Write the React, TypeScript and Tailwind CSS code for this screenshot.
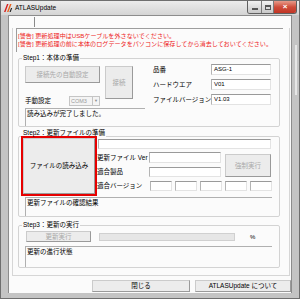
import React from "react";

const font = "font-['Liberation_Sans','Noto_Sans_CJK_JP',sans-serif]";

function TextBox({ className = "", children }: { className?: string; children?: React.ReactNode }) {
  return (
    <div
      className={[
        "bg-white border border-t-[#9a9a9a] border-l-[#b4b4b4] border-r-[#e3e3e3] border-b-[#e3e3e3] pl-[2px] text-[6px] leading-[8px] text-black overflow-hidden whitespace-nowrap",
        className,
      ].join(" ")}
    >
      {children}
    </div>
  );
}

function Btn({
  className = "",
  disabled = false,
  children,
}: {
  className?: string;
  disabled?: boolean;
  children?: React.ReactNode;
}) {
  return (
    <button
      type="button"
      className={[
        "flex items-center justify-center bg-[#ececec] border border-[#cbcbcb] border-r-[#9a9a9a] border-b-[#9a9a9a] whitespace-nowrap text-[6.5px] leading-[8px]",
        disabled ? "text-[#a8a8a8]" : "text-black",
        className,
      ].join(" ")}
    >
      {children}
    </button>
  );
}

function Group({
  title,
  className = "",
  legendClassName = "",
  children,
}: {
  title: string;
  className?: string;
  legendClassName?: string;
  children?: React.ReactNode;
}) {
  return (
    <fieldset className={["border border-[#d3d3d3] rounded-[2px] min-w-0", className].join(" ")}>
      <legend className={["ml-[3px] px-[1px] text-[6.5px] leading-[8px] text-black relative z-10", legendClassName].join(" ")}>
        {title}
      </legend>
      {children}
    </fieldset>
  );
}

function Field({ label, value }: { label: string; value: string }) {
  return (
    <div className="flex items-center h-[11px]">
      <span className="w-[58px] text-[6.5px] leading-[8px] whitespace-nowrap">{label}</span>
      <TextBox className="w-[60px] h-[11px]">{value}</TextBox>
    </div>
  );
}

function Logo() {
  return (
    <svg width="10" height="10" viewBox="0 0 10 10">
      <path d="M1 9 L4 1 L5.5 1 L2.5 9 Z" fill="#d62020" />
      <path d="M4 9 L7 1 L8.5 1 L5.5 9 Z" fill="#e8641c" />
      <path d="M6.5 9 L8 5 L9.2 5 L7.7 9 Z" fill="#222" />
    </svg>
  );
}

export default function App() {
  return (
    <div className={`w-[300px] h-[299px] flex flex-col bg-[#c4c4c4] border border-[#6f6f6f] text-black ${font}`}>
      {/* title bar */}
      <div className="h-[14px] flex items-start bg-linear-to-b from-[#ececec] to-[#d4d4d4]">
        <div className="ml-[2px] mt-[2px]">
          <Logo />
        </div>
        <span className="ml-[2px] mt-[3px] text-[6.5px] leading-[8px]">ATLASUpdate</span>
        <div className="ml-auto mr-[2px] flex h-[13px] border border-t-0 border-[#5f5f5f] rounded-b-[3px] overflow-hidden">
          <div className="w-[14px] flex items-center justify-center bg-linear-to-b from-[#f2f2f2] to-[#c8c8c8] border-r border-[#7a7a7a]">
            <div className="w-[6px] h-[2px] mt-[4px] bg-white border border-[#555]" />
          </div>
          <div className="w-[12px] flex items-center justify-center bg-linear-to-b from-[#f2f2f2] to-[#c8c8c8] border-r border-[#7a7a7a]">
            <div className="w-[6px] h-[5px] border border-[#555] border-t-2" />
          </div>
          <div className="w-[22px] flex items-center justify-center bg-linear-to-b from-[#e69a8a] via-[#cf4c3a] to-[#c13525]">
            <span className="text-white text-[8px] leading-[8px] font-bold">×</span>
          </div>
        </div>
      </div>

      <div className="flex-1 flex">
        {/* left frame */}
        <div className="w-[7px]" />
        {/* client */}
        <div className="w-[284px] flex flex-col bg-[#fbfbfb] border border-[#8c8c8c] border-b-0">
          <div className="h-[12px] flex">
            <div className="ml-[25px] mt-[1px] w-px h-[10px] bg-[#8a8a8a]" />
          </div>

          <div className="ml-[3px] w-[278px] h-[248px] flex flex-col border border-t-0 border-[#d6d6d6]">
            {/* warnings */}
            <div className="ml-[3px] w-[267px] h-[24px] border-t border-l border-[#9d9d9d] pl-[1px] pt-[3px] text-[6.1px] leading-[8px] text-[#ee1c1c] whitespace-nowrap">
              <div>[警告] 更新処理中はUSBケーブルを外さないでください。</div>
              <div>[警告] 更新処理の前に本体のログデータをパソコンに保存してから消去しておいてください。</div>
            </div>

            {/* Step1 */}
            <Group title="Step1：本体の準備" className="ml-[5px] mt-[2px] w-[262px]">
              <div className="flex items-start">
                <div className="ml-[6px] mt-[4px] w-[120px] flex flex-col">
                  <div className="flex items-start">
                    <div className="flex flex-col">
                      <Btn disabled className="w-[75px] h-[17px]">
                        接続先の自動設定
                      </Btn>
                      <div className="mt-[13px] h-[10px] flex items-center">
                        <span className="w-[44px] text-[6.5px] leading-[8px]">手動設定</span>
                        <div className="w-[31px] h-[10px] flex border border-[#c5c5c5] bg-[#f4f4f4]">
                          <span className="flex-1 pl-[1px] text-[5.5px] leading-[8px] text-[#9a9a9a]">COM3</span>
                          <div className="w-[7px] border-l border-[#c5c5c5] flex items-center justify-center text-[4px] text-[#8a8a8a]">
                            ▼
                          </div>
                        </div>
                      </div>
                    </div>
                    <Btn disabled className="ml-[5px] w-[28px] h-[33px]">
                      接続
                    </Btn>
                  </div>
                  <div className="mt-[2px] h-[18px] border-t border-l border-[#b0b0b0] pl-[1px] pt-[1px] text-[6.5px] leading-[8px] whitespace-nowrap">
                    読み込みが完了しました。
                  </div>
                </div>
                <div className="ml-[8px] mt-[2px] flex flex-col gap-[4px]">
                  <Field label="品番" value="ASG-1" />
                  <Field label="ハードウエア" value="V01" />
                  <Field label="ファイルバージョン" value="V1.03" />
                </div>
              </div>
            </Group>

            {/* Step2 */}
            <Group title="Step2：更新ファイルの準備" className="ml-[5px] mt-[5px] w-[262px]" legendClassName="-top-[3px]">
              <div className="flex items-start">
                <div className="ml-[2px] mt-[-4px] w-[76px] h-[60px] border-2 border-[#e60000] flex">
                  <Btn className="flex-1">ファイルの読み込み</Btn>
                </div>
                <div className="ml-[1px] mt-[-1px] flex flex-col">
                  <TextBox className="w-[173px] h-[10px]" />
                  <div className="mt-[3px] flex items-start">
                    <div className="flex flex-col gap-[4px]">
                      <div className="flex items-center h-[11px]">
                        <span className="w-[52px] -ml-[1px] text-[6.5px] leading-[8px] whitespace-nowrap">更新ファイル Ver</span>
                        <TextBox className="w-[72px] h-[11px]" />
                      </div>
                      <div className="flex items-center h-[10px]">
                        <span className="w-[52px] -ml-[1px] text-[6.5px] leading-[8px] whitespace-nowrap">適合製品</span>
                        <TextBox className="w-[72px] h-[10px]" />
                      </div>
                    </div>
                    <Btn disabled className="ml-[4px] mt-[2px] w-[46px] h-[23px]">
                      強制実行
                    </Btn>
                  </div>
                  <div className="mt-[4px] flex items-center h-[10px]">
                    <span className="w-[53px] -ml-[1px] text-[6.5px] leading-[8px] whitespace-nowrap">適合バージョン</span>
                    <div className="flex gap-[3px]">
                      {[0, 1, 2, 3, 4].map((i) => (
                        <TextBox key={i} className="w-[22px] h-[10px]" />
                      ))}
                    </div>
                  </div>
                </div>
              </div>
              <div className="ml-[6px] mt-[1px] w-[247px] h-[19px] border-t border-l border-[#b0b0b0] pl-[1px] pt-[1px] text-[6.5px] leading-[8px] whitespace-nowrap">
                更新ファイルの確認結果
              </div>
            </Group>

            {/* Step3 */}
            <Group title="Step3：更新の実行" className="ml-[5px] mt-[4px] w-[262px]">
              <div className="flex items-center mt-[2px]">
                <Btn disabled className="ml-[7px] w-[65px] h-[11px]">
                  更新実行
                </Btn>
                <div className="ml-[8px] w-[136px] h-[8px] bg-[#e6e6e6] border border-[#d0d0d0]" />
                <span className="ml-[15px] text-[6px] leading-[8px]">%</span>
              </div>
              <div className="ml-[6px] mt-[4px] w-[247px] h-[21px] border-t border-l border-[#b0b0b0] pl-[1px] pt-[1px] text-[6.5px] leading-[8px] whitespace-nowrap">
                更新の進行状態
              </div>
            </Group>
          </div>

          <div className="mt-[4px] flex">
            <Btn className="ml-[83px] w-[98px] h-[12px]">閉じる</Btn>
            <Btn className="ml-[5px] w-[96px] h-[12px]">ATLASUpdate について</Btn>
          </div>
        </div>
        {/* right frame */}
        <div className="flex-1 flex">
          <div className="ml-[3px] mt-[30px] w-[2px] h-[50px] bg-[#e6e6e6]" />
        </div>
      </div>
      <div className="h-[5px]" />
    </div>
  );
}
